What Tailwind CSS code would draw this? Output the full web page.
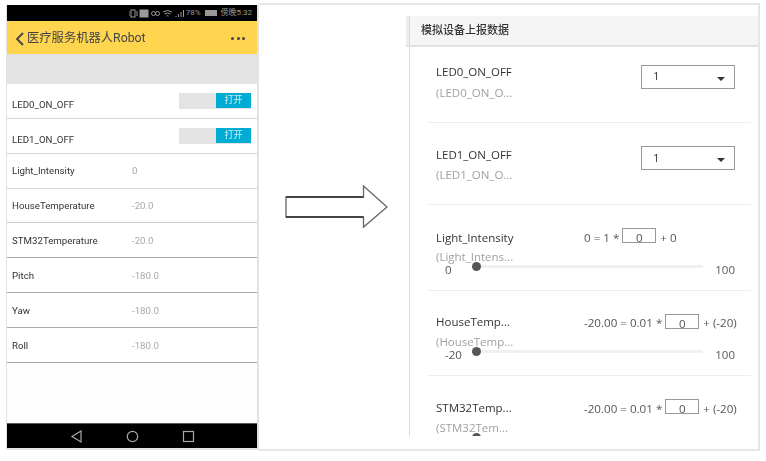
<!DOCTYPE html>
<html lang="en">
<head>
    <meta charset="UTF-8">
    <title>Robot</title>
    <script src="https://cdn.jsdelivr.net/npm/@tailwindcss/browser@4"></script>
</head>
<body class="bg-white w-[766px] h-[461px] overflow-hidden font-['Roboto','Noto_Sans_CJK_SC',sans-serif]">
    <div class="ml-[6px] mt-[3px] w-[754px] flex items-start blur-[0.3px]">
        <!-- phone -->
        <div class="mt-[2px] w-[253px] h-[445px] shrink-0 border-l border-r-2 border-b-2 border-[#e2e2e2] flex flex-col text-[9.700px] text-[#333]">
            <div class="h-[16px] bg-black flex items-center justify-end pr-[5px] text-[8px] text-[#999]">
                <svg width="56" height="9" viewBox="0 0 56 9" fill="none" stroke="#999">
                    <path d="M0 2v5M8 2v5"/>
                    <rect x="2" y="1" width="4" height="7"/>
                    <rect x="11" y="1" width="8" height="7" fill="#999"/>
                    <circle cx="24.500" cy="4.500" r="2"/><circle cx="28.500" cy="4.500" r="2"/>
                    <path d="M34 3q4.500-3 9 0M35.500 5q3-2 6 0M37.500 7q1-.6 2 0"/>
                    <path d="M47 8V7M49.500 8V5M52 8V3M54.500 8V1"/>
                </svg>
                <span class="ml-[1px]">78%</span>
                <span class="ml-[4px] w-[12px] h-[6px] bg-[#999]"></span>
                <span class="ml-[4px]">傍晚5:32</span>
            </div>
            <div class="h-[33px] bg-[#ffd54f] flex items-center pt-[2px] pl-[8px] pr-[12px] text-[12.300px] text-[#444]">
                <svg width="9" height="14" viewBox="0 0 9 14" fill="none" stroke="#444" stroke-width="1.800"><path d="M8 1 2 7l6 6"/></svg>
                <span class="ml-[3px]">医疗服务机器人Robot</span>
                <span class="ml-auto flex gap-[2.500px]">
                    <i class="size-[3px] rounded-full bg-[#444]"></i>
                    <i class="size-[3px] rounded-full bg-[#444]"></i>
                    <i class="size-[3px] rounded-full bg-[#444]"></i>
                </span>
            </div>
            <div class="h-[30px] bg-[#e3e3e3]"></div>
            <div class="h-[35px] border-b border-[#d8d8d8] flex pl-[5px] pr-[6px]">
                <span class="pt-[14px]">LED0_ON_OFF</span>
                <div class="ml-auto mt-[9px] w-[72px] h-[16px] bg-[#e3e3e3] flex justify-end">
                    <span class="w-[35px] h-[15px] bg-[#00acd4] text-[#cdeef6] text-[9px] text-center leading-[15px]">打开</span>
                </div>
            </div>
            <div class="h-[35px] border-b border-[#d8d8d8] flex pl-[5px] pr-[6px]">
                <span class="pt-[14px]">LED1_ON_OFF</span>
                <div class="ml-auto mt-[9px] w-[72px] h-[16px] bg-[#e3e3e3] flex justify-end">
                    <span class="w-[35px] h-[15px] bg-[#00acd4] text-[#cdeef6] text-[9px] text-center leading-[15px]">打开</span>
                </div>
            </div>
            <div class="h-[35px] border-b border-[#d8d8d8] flex items-center pl-[5px]"><span class="w-[120px]">Light_Intensity</span><span class="text-[#aaa]">0</span></div>
            <div class="h-[34px] pt-[2px] border-b border-[#cfcfcf] flex items-center pl-[5px]"><span class="w-[120px]">HouseTemperature</span><span class="text-[#aaa]">-20.0</span></div>
            <div class="h-[35px] pt-[2px] border-b border-[#aaa] flex items-center pl-[5px]"><span class="w-[120px]">STM32Temperature</span><span class="text-[#aaa]">-20.0</span></div>
            <div class="h-[35px] pt-[2px] border-b border-[#aaa] flex items-center pl-[5px]"><span class="w-[120px]">Pitch</span><span class="text-[#aaa]">-180.0</span></div>
            <div class="h-[35px] pt-[2px] border-b border-[#aaa] flex items-center pl-[5px]"><span class="w-[120px]">Yaw</span><span class="text-[#aaa]">-180.0</span></div>
            <div class="h-[35px] pt-[2px] border-b border-[#aaa] flex items-center pl-[5px]"><span class="w-[120px]">Roll</span><span class="text-[#aaa]">-180.0</span></div>
            <div class="flex-1 bg-[#fdfdfd]"></div>
            <div class="h-[25px] bg-black border-t border-[#555] flex items-center">
                <svg width="250" height="16" viewBox="0 0 250 16" fill="none" stroke="#aaa" stroke-width="1.200">
                    <path d="M74 3 65 8.500l9 5.500z"/>
                    <circle cx="125.500" cy="8.500" r="5.200"/>
                    <rect x="176.500" y="3.500" width="10" height="10"/>
                </svg>
            </div>
        </div>

        <div class="flex-1 min-w-0 h-[448px] border-y-2 border-r-2 border-[#e6e6e6] flex items-start">
            <!-- arrow -->
            <div class="w-[147px] shrink-0 pt-[180px] pl-[26px]">
                <svg width="106" height="44" viewBox="0 0 106 44" fill="#fff" stroke="#666">
                    <path d="M1 12H78.500V1L102 22 78.500 42V32H1z" stroke-width="1.300"/>
                    <path d="M1 12H78.500M1 32H78.500" stroke="#444" stroke-width="1.800"/>
                </svg>
            </div>

            <!-- device report panel -->
            <div class="flex-1 min-w-0 h-[420px] mt-[11px] overflow-hidden text-[11.500px] text-[#333] font-['Open_Sans','Noto_Sans_CJK_SC',sans-serif]">
                <div class="h-[31px] bg-[#f5f5f5] border-b-2 border-[#e2e2e2] flex">
                    <span class="w-[3px] bg-[#ececec]"></span>
                    <span class="border-l border-[#ddd] pl-[11px] flex-1 flex items-center font-medium text-[11px]">模拟设备上报数据</span>
                </div>
                <div class="ml-[3px] h-[389px] border-l border-[#ddd] pl-[18px] pr-[7px]">
                    <div class="h-[76px] border-b border-[#eee] flex justify-between pl-[8px] pr-[16px]">
                        <div class="pt-[17px]">
                            <div class="leading-[15px]">LED0_ON_OFF</div>
                            <div class="leading-[15px] mt-[6px] text-[#a0a0a0]">(LED0_ON_O...</div>
                        </div>
                        <div class="mt-[18px] w-[94px] h-[24px] pb-[2px] border border-[#999] flex items-center justify-between pl-[11px] pr-[9px]">
                            <span>1</span>
                            <span class="mt-[5px] border-x-[4.500px] border-x-transparent border-t-[4.500px] border-t-[#333]"></span>
                        </div>
                    </div>
                    <div class="h-[82px] border-b border-[#eee] flex justify-between pl-[8px] pr-[16px]">
                        <div class="pt-[24px]">
                            <div class="leading-[15px]">LED1_ON_OFF</div>
                            <div class="leading-[15px] mt-[5px] text-[#a0a0a0]">(LED1_ON_O...</div>
                        </div>
                        <div class="mt-[23px] w-[94px] h-[24px] border border-[#999] flex items-center justify-between pl-[11px] pr-[9px]">
                            <span>1</span>
                            <span class="mt-[3px] border-x-[4.500px] border-x-transparent border-t-[4.500px] border-t-[#333]"></span>
                        </div>
                    </div>
                    <div class="h-[86px] border-b border-[#eee] pl-[8px] pr-[16px] pt-[25px]">
                        <div class="flex h-[15px] leading-[15px]">
                            <span class="w-[148px] shrink-0">Light_Intensity</span>
                            <span class="flex text-[11.600px] text-[#555]">0 = 1 *<span class="ml-[3px] mr-[4px] w-[34px] h-[15px] -mt-[2px] border border-[#999] text-center leading-[18px]">0</span>+ 0</span>
                        </div>
                        <div class="leading-[13px] mt-[5px] text-[#a0a0a0]">(Light_Intens...</div>
                        <div class="flex items-center h-[13px] text-[#555]">
                            <span class="w-[40px] pl-[9px]">0</span>
                            <div class="relative w-[227px] h-[3px] -mt-[7px] bg-[#f0f0f0] rounded-full"><i class="absolute -left-[4px] -top-[3px] size-[9px] rounded-full bg-[#555]"></i></div>
                            <span class="ml-auto">100</span>
                        </div>
                    </div>
                    <div class="h-[85px] border-b border-[#eee] pl-[8px] pr-[16px] pt-[23px]">
                        <div class="flex h-[15px] leading-[15px]">
                            <span class="w-[148px] shrink-0">HouseTemp...</span>
                            <span class="flex mt-[1px] text-[11.600px] whitespace-nowrap text-[#555]">-20.00 = 0.01 *<span class="ml-[3px] mr-[4px] w-[34px] h-[15px] -mt-[1px] border border-[#999] text-center leading-[18px]">0</span>+ (-20)</span>
                        </div>
                        <div class="leading-[13px] mt-[6px] text-[#a0a0a0]">(HouseTemp...</div>
                        <div class="flex items-center h-[13px] text-[#555]">
                            <span class="w-[40px] pl-[9px]">-20</span>
                            <div class="relative w-[227px] h-[3px] -mt-[7px] bg-[#f0f0f0] rounded-full"><i class="absolute -left-[4px] -top-[3px] size-[9px] rounded-full bg-[#555]"></i></div>
                            <span class="ml-auto">100</span>
                        </div>
                    </div>
                    <div class="pl-[8px] pr-[16px] pt-[24px]">
                        <div class="flex h-[15px] leading-[15px]">
                            <span class="w-[148px] shrink-0">STM32Temp...</span>
                            <span class="flex mt-[1px] text-[11.600px] whitespace-nowrap text-[#555]">-20.00 = 0.01 *<span class="ml-[3px] mr-[4px] w-[34px] h-[15px] -mt-[2px] border border-[#999] text-center leading-[18px]">0</span>+ (-20)</span>
                        </div>
                        <div class="leading-[13px] mt-[6px] text-[#a0a0a0]">(STM32Tem...</div>
                        <div class="flex items-center h-[13px] text-[#555]">
                            <span class="w-[40px] pl-[9px]">-20</span>
                            <div class="relative w-[227px] h-[3px] -mt-[7px] bg-[#f0f0f0] rounded-full"><i class="absolute -left-[4px] -top-[3px] size-[9px] rounded-full bg-[#555]"></i></div>
                            <span class="ml-auto">100</span>
                        </div>
                    </div>
                </div>
            </div>
        </div>
    </div>
</body>
</html>
